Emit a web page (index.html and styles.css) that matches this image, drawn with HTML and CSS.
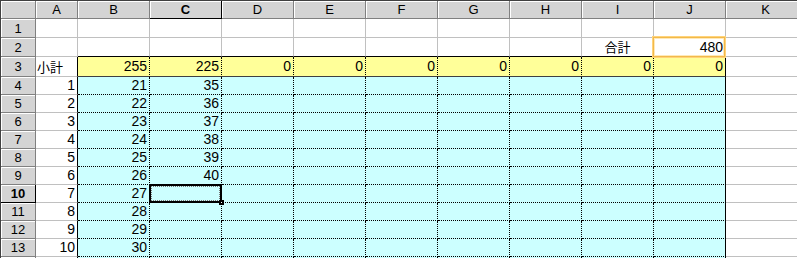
FILE: index.html
```html
<!DOCTYPE html>
<html lang="ja">
<head>
    <meta charset="UTF-8">
    <title>Sheet1</title>
    <link rel="stylesheet" href="styles.css">
</head>
<body>
    <div class="sheet">
        <!-- column headers -->
        <div class="h corner"></div><div class="h">A</div><div class="h">B</div><div class="h on">C</div><div class="h">D</div><div class="h">E</div><div class="h">F</div><div class="h">G</div><div class="h">H</div><div class="h">I</div><div class="h">J</div><div class="h">K</div>

        <div class="h">1</div><div class="c"></div><div class="c"></div><div class="c"></div><div class="c"></div><div class="c"></div><div class="c"></div><div class="c"></div><div class="c"></div><div class="c"></div><div class="c"></div><div class="c"></div>

        <div class="h">2</div><div class="c"></div><div class="c top"></div><div class="c top"></div><div class="c top"></div><div class="c top"></div><div class="c top"></div><div class="c top"></div><div class="c top"></div><div class="c top mid">合計</div><div class="c top sum"><span class="pick"></span>480</div><div class="c"></div>

        <div class="h">3</div><div class="c a lft">小計</div><div class="c y">255</div><div class="c y">225</div><div class="c y">0</div><div class="c y">0</div><div class="c y">0</div><div class="c y">0</div><div class="c y">0</div><div class="c y">0</div><div class="c y end">0</div><div class="c"></div>

        <div class="h">4</div><div class="c a">1</div><div class="c b">21</div><div class="c b">35</div><div class="c b"></div><div class="c b"></div><div class="c b"></div><div class="c b"></div><div class="c b"></div><div class="c b"></div><div class="c b end"></div><div class="c"></div>
        <div class="h">5</div><div class="c a">2</div><div class="c b">22</div><div class="c b">36</div><div class="c b"></div><div class="c b"></div><div class="c b"></div><div class="c b"></div><div class="c b"></div><div class="c b"></div><div class="c b end"></div><div class="c"></div>
        <div class="h">6</div><div class="c a">3</div><div class="c b">23</div><div class="c b">37</div><div class="c b"></div><div class="c b"></div><div class="c b"></div><div class="c b"></div><div class="c b"></div><div class="c b"></div><div class="c b end"></div><div class="c"></div>
        <div class="h">7</div><div class="c a">4</div><div class="c b">24</div><div class="c b">38</div><div class="c b"></div><div class="c b"></div><div class="c b"></div><div class="c b"></div><div class="c b"></div><div class="c b"></div><div class="c b end"></div><div class="c"></div>
        <div class="h">8</div><div class="c a">5</div><div class="c b">25</div><div class="c b">39</div><div class="c b"></div><div class="c b"></div><div class="c b"></div><div class="c b"></div><div class="c b"></div><div class="c b"></div><div class="c b end"></div><div class="c"></div>
        <div class="h">9</div><div class="c a">6</div><div class="c b">26</div><div class="c b">40</div><div class="c b"></div><div class="c b"></div><div class="c b"></div><div class="c b"></div><div class="c b"></div><div class="c b"></div><div class="c b end"></div><div class="c"></div>
        <div class="h on">10</div><div class="c a">7</div><div class="c b">27</div><div class="c b cur"><span class="sel"><i class="handle"></i></span></div><div class="c b"></div><div class="c b"></div><div class="c b"></div><div class="c b"></div><div class="c b"></div><div class="c b"></div><div class="c b end"></div><div class="c"></div>
        <div class="h">11</div><div class="c a">8</div><div class="c b">28</div><div class="c b"></div><div class="c b"></div><div class="c b"></div><div class="c b"></div><div class="c b"></div><div class="c b"></div><div class="c b"></div><div class="c b end"></div><div class="c"></div>
        <div class="h">12</div><div class="c a">9</div><div class="c b">29</div><div class="c b"></div><div class="c b"></div><div class="c b"></div><div class="c b"></div><div class="c b"></div><div class="c b"></div><div class="c b"></div><div class="c b end"></div><div class="c"></div>
        <div class="h">13</div><div class="c a">10</div><div class="c b">30</div><div class="c b"></div><div class="c b"></div><div class="c b"></div><div class="c b"></div><div class="c b"></div><div class="c b"></div><div class="c b"></div><div class="c b end"></div><div class="c"></div>
        <div class="h"></div><div class="c a"></div><div class="c b"></div><div class="c b"></div><div class="c b"></div><div class="c b"></div><div class="c b"></div><div class="c b"></div><div class="c b"></div><div class="c b"></div><div class="c b end"></div><div class="c"></div>
    </div>
</body>
</html>
```

FILE: styles.css
```css
*{
    margin: 0;
    padding: 0;
    box-sizing: border-box;
}
html,body{
    width: 100%;
    height: 100%;
    overflow: hidden;
    background: #fff;
}
.sheet{
    display: grid;
    grid-template-columns: 35px 42px repeat(9, 72px) 80px;
    grid-template-rows: 18px 19px 19px 20px repeat(11, 18px);
    border-top: 1px solid #404040;
    border-left: 1px solid #404040;
    font-family: "Liberation Sans", "Noto Sans CJK JP", sans-serif;
    font-size: 14px;
    color: #000;
}
/* headers */
.h{
    display: flex;
    align-items: center;
    justify-content: center;
    background: #d4d4d4;
    border-right: 1px solid #808080;
    border-bottom: 1px solid #808080;
    box-shadow: inset 1px 1px 0 #fff;
    font-size: 13px;
    line-height: 1;
}
.h.on{
    font-weight: bold;
    border-bottom-color: #000;
    border-right-color: #000;
}
/* cells */
.c{
    position: relative;
    display: flex;
    align-items: flex-end;
    justify-content: flex-end;
    padding: 0 2px 1px 0;
    border-right: 1px solid #c0c0c0;
    border-bottom: 1px solid #c0c0c0;
    line-height: 16px;
    white-space: nowrap;
}
.c.top{
    border-bottom-color: #000;
}
.c.mid{
    justify-content: center;
    padding: 0;
    font-family: "Noto Sans CJK JP", sans-serif;
    font-size: 13px;
    line-height: 18px;
}
.c.lft{
    justify-content: flex-start;
    padding: 0 0 0 1px;
    font-family: "Noto Sans CJK JP", sans-serif;
    font-size: 13px;
    line-height: 19px;
}
.c.a{
    border-right-color: #000;
}
.c.y{
    background: #ffff99;
    border-right: 1px dotted #000;
    border-bottom: 1px solid #404040;
    padding-bottom: 2px;
}
.c.b{
    background: #ccffff;
    border-right: 1px dotted #000;
    border-bottom: 1px dotted #000;
}
.c.end{
    border-right: 1px solid #000;
}
/* J2 highlight */
.sum .pick{
    position: absolute;
    z-index: 2;
    left: -2px;
    top: -2px;
    right: -1px;
    bottom: -2px;
    border: 1px solid #ffd37a;
    box-shadow: inset 0 0 0 1px #f2b94a, inset 0 0 0 2px #ffe9b8;
}
/* active cell C10 */
.sel{
    position: absolute;
    z-index: 2;
    left: -1px;
    top: -1px;
    right: -1px;
    bottom: -1px;
    border: 2px solid #000;
    outline: 1px dotted #777;
    outline-offset: -3px;
}
.handle{
    position: absolute;
    right: -4px;
    bottom: -4px;
    width: 5px;
    height: 5px;
    background: #fff;
    border: 1px solid #000;
    box-shadow: inset 0 0 0 1px #000;
}
```
